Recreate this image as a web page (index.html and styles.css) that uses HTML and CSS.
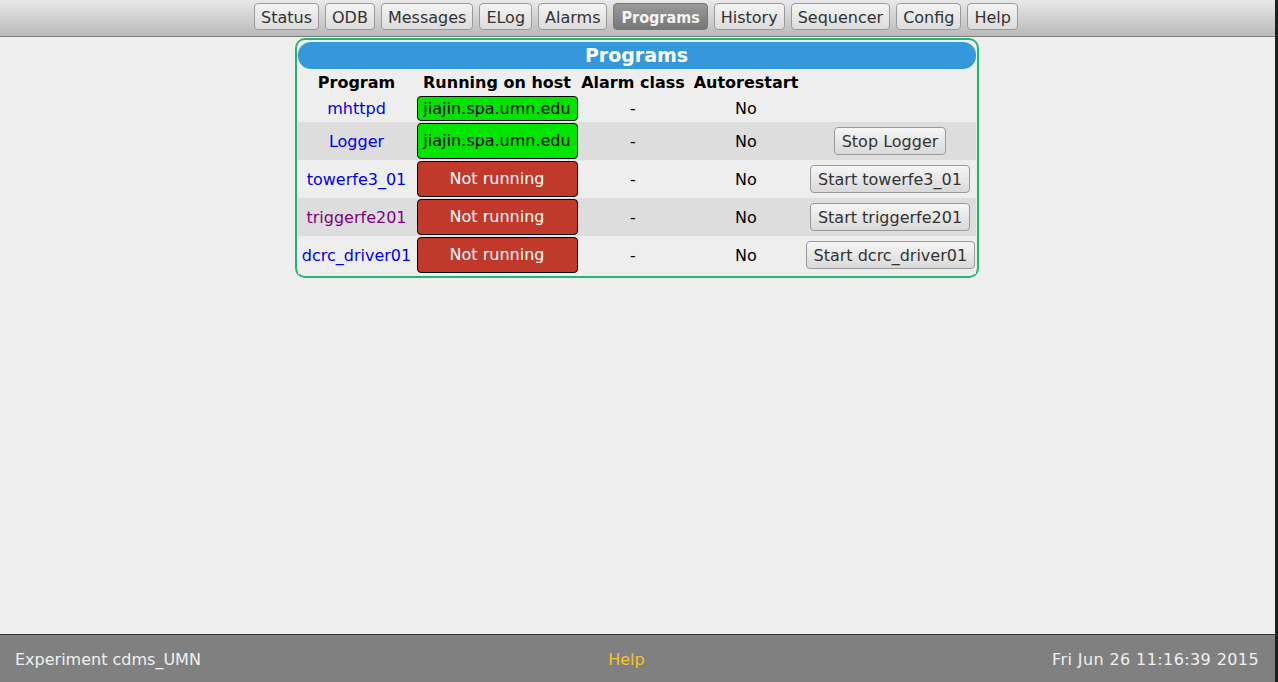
FILE: index.html
```html
<!DOCTYPE html>
<html>
<head>
<meta charset="utf-8">
<title>Programs</title>
<link rel="stylesheet" href="styles.css">
</head>
<body>
<div class="frame">
  <div class="page">
    <div class="topbar">
      <button class="navbtn">Status</button>
      <button class="navbtn">ODB</button>
      <button class="navbtn">Messages</button>
      <button class="navbtn">ELog</button>
      <button class="navbtn">Alarms</button>
      <button class="navbtn active">Programs</button>
      <button class="navbtn">History</button>
      <button class="navbtn">Sequencer</button>
      <button class="navbtn">Config</button>
      <button class="navbtn">Help</button>
    </div>
    <div class="main">
      <div class="box">
        <div class="boxtitle">Programs</div>
        <table class="prog">
          <colgroup>
            <col class="c1"><col class="c2"><col class="c3"><col class="c4"><col class="c5">
          </colgroup>
          <tr class="head">
            <th>Program</th>
            <th>Running on host</th>
            <th>Alarm class</th>
            <th>Autorestart</th>
            <th></th>
          </tr>
          <tr class="odd short">
            <td><a class="lnk">mhttpd</a></td>
            <td><div class="host run">jiajin.spa.umn.edu</div></td>
            <td>-</td>
            <td>No</td>
            <td></td>
          </tr>
          <tr class="even">
            <td><a class="lnk">Logger</a></td>
            <td><div class="host run">jiajin.spa.umn.edu</div></td>
            <td>-</td>
            <td>No</td>
            <td><button class="act">Stop Logger</button></td>
          </tr>
          <tr class="odd">
            <td><a class="lnk">towerfe3_01</a></td>
            <td><div class="host stop">Not running</div></td>
            <td>-</td>
            <td>No</td>
            <td><button class="act">Start towerfe3_01</button></td>
          </tr>
          <tr class="even">
            <td><a class="lnk visited">triggerfe201</a></td>
            <td><div class="host stop">Not running</div></td>
            <td>-</td>
            <td>No</td>
            <td><button class="act">Start triggerfe201</button></td>
          </tr>
          <tr class="odd">
            <td><a class="lnk">dcrc_driver01</a></td>
            <td><div class="host stop">Not running</div></td>
            <td>-</td>
            <td>No</td>
            <td><button class="act">Start dcrc_driver01</button></td>
          </tr>
        </table>
      </div>
    </div>
    <div class="footer">
      <span class="fleft">Experiment cdms_UMN</span>
      <span class="fhelp">Help</span>
      <span class="fright">Fri Jun 26 11:16:39 2015</span>
    </div>
  </div>
  <div class="edge"></div>
</div>
</body>
</html>
```

FILE: styles.css
```css
html, body {
  margin: 0;
  padding: 0;
  height: 100%;
}
body {
  font-family: "DejaVu Sans", Verdana, sans-serif;
  font-size: 16px;
  background: #eeeeee;
  color: #000;
}
.frame {
  display: flex;
  height: 100vh;
}
.page {
  flex: 1;
  display: flex;
  flex-direction: column;
  min-width: 0;
}
.edge {
  width: 3px;
  background: #0c2620;
}
.topbar {
  height: 37px;
  box-sizing: border-box;
  border-bottom: 1px solid #7d7d7d;
  background: linear-gradient(#e9e9e9, #b9b9b9);
  display: flex;
  justify-content: center;
  align-items: flex-start;
  gap: 6px;
  padding-top: 3px;
  padding-right: 3px;
}
.navbtn {
  font-family: "DejaVu Sans", Verdana, sans-serif;
  font-size: 16px;
  color: #333;
  height: 27px;
  padding: 1px 6px 0;
  border: 1px solid #9a9a9a;
  border-radius: 4px;
  background: linear-gradient(#f4f4f4, #dcdcdc);
}
.navbtn.active {
  background: linear-gradient(#9a9a9a, #767676);
  color: #f4f4f4;
  font-family: "DejaVu Sans Condensed", "DejaVu Sans", sans-serif;
  font-stretch: condensed;
  font-weight: bold;
  font-size: 16px;
  border-color: #777;
  padding: 1px 7px 0;
}
.main {
  flex: 1;
  display: flex;
  justify-content: center;
  align-items: flex-start;
  padding-top: 1px;
}
.box {
  width: 678px;
  border: 2px solid #22b573;
  border-radius: 10px;
  padding: 2px 1px 2px 1px;
  margin-left: -2px;
}
.boxtitle {
  background: #3498db;
  color: #fff;
  font-weight: bold;
  font-size: 19px;
  text-align: center;
  height: 27px;
  line-height: 27px;
  border-radius: 13px;
}
.prog {
  width: 678px;
  table-layout: fixed;
  border-collapse: collapse;
  margin-top: 1px;
}
.c1 { width: 118px; }
.c2 { width: 163px; }
.c3 { width: 109px; }
.c4 { width: 117px; }
.c5 { width: 171px; }
.prog th {
  font-weight: bold;
  height: 25px;
  padding: 0;
  white-space: nowrap;
}
.prog td {
  text-align: center;
  padding: 1px 1px;
  height: 35px;
  white-space: nowrap;
}
.prog tr.short td {
  height: 24px;
}
.prog tr.odd {
  background: #eeeeee;
}
.prog tr.even {
  background: #dddddd;
}
.lnk {
  color: #0000ee;
}
.lnk.visited {
  color: #800080;
}
.host {
  border: 1px solid #000;
  border-radius: 4px;
  height: 36px;
  line-height: 34px;
  box-sizing: border-box;
}
.short .host {
  height: 25px;
  line-height: 23px;
}
.host.run {
  background: #00e400;
  color: #000;
}
.host.stop {
  background: #c0392b;
  color: #fff;
}
.act {
  font-family: "DejaVu Sans", Verdana, sans-serif;
  font-size: 16px;
  color: #333;
  height: 28px;
  padding: 0 7px;
  border: 1px solid #999;
  border-radius: 4px;
  background: linear-gradient(#f6f6f6, #d9d9d9);
}
.footer {
  height: 48px;
  box-sizing: border-box;
  border-top: 1px solid #333;
  background: #808080;
  color: #f0f0f0;
  display: flex;
  align-items: center;
  justify-content: space-between;
  padding: 1px 16px 0 15px;
  font-size: 16px;
}
.fhelp {
  color: #f4c430;
}
.fright {
  letter-spacing: 0.4px;
}
```
